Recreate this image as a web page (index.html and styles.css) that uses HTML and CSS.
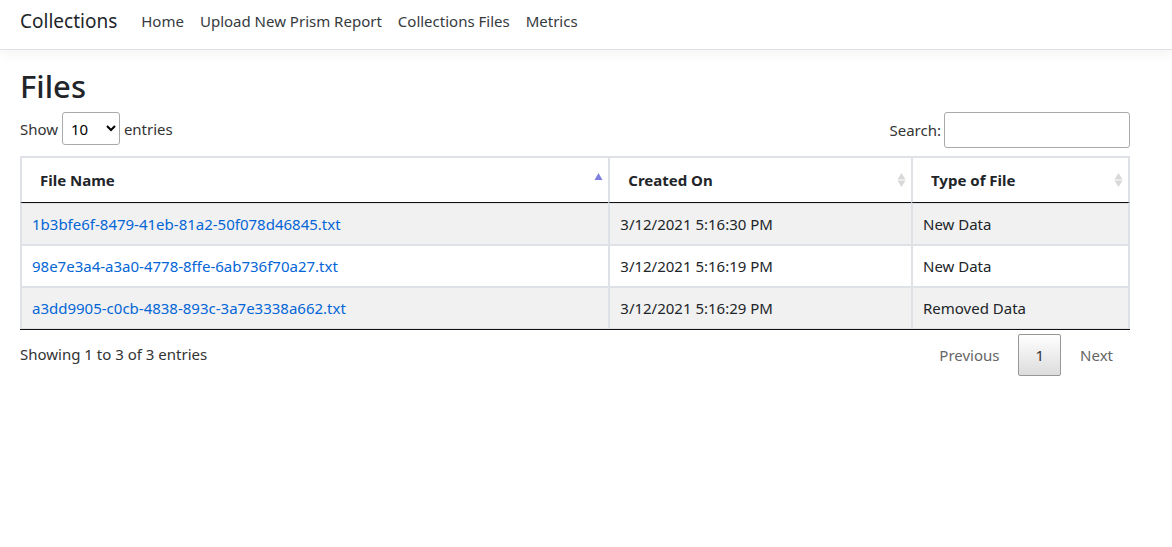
FILE: index.html
```html
<!DOCTYPE html>
<html lang="en">
<head>
<meta charset="utf-8">
<title>Files - Collections</title>
<link rel="stylesheet" href="styles.css">
</head>
<body>
<header class="navbar">
  <a class="brand" href="#">Collections</a>
  <nav class="nav">
    <a href="#">Home</a>
    <a href="#">Upload New Prism Report</a>
    <a href="#">Collections Files</a>
    <a href="#">Metrics</a>
  </nav>
</header>
<main class="content">
  <h1 class="title">Files</h1>
  <div class="toolbar">
    <label class="length">Show
      <select><option>10</option><option>25</option><option>50</option><option>100</option></select>
      entries</label>
    <label class="search">Search:<input type="search"></label>
  </div>
  <table class="files">
    <colgroup><col class="col-name"><col><col class="col-type"></colgroup>
    <thead>
      <tr>
        <th scope="col"><span class="head">File Name <svg class="sort" viewBox="0 0 9 14"><path class="on" d="M.5 7 4.500 0 8.500 7z"/></svg></span></th>
        <th scope="col"><span class="head">Created On <svg class="sort" viewBox="0 0 9 14"><path d="M.5 6.500 4.500 0 8.500 6.500zM.5 7.500h8L4.500 14z"/></svg></span></th>
        <th scope="col"><span class="head">Type of File <svg class="sort" viewBox="0 0 9 14"><path d="M.5 6.500 4.500 0 8.500 6.500zM.5 7.500h8L4.500 14z"/></svg></span></th>
      </tr>
    </thead>
    <tbody>
      <tr><td><a href="#">1b3bfe6f-8479-41eb-81a2-50f078d46845.txt</a></td><td>3/12/2021 5:16:30 PM</td><td>New Data</td></tr>
      <tr><td><a href="#">98e7e3a4-a3a0-4778-8ffe-6ab736f70a27.txt</a></td><td>3/12/2021 5:16:19 PM</td><td>New Data</td></tr>
      <tr><td><a href="#">a3dd9905-c0cb-4838-893c-3a7e3338a662.txt</a></td><td>3/12/2021 5:16:29 PM</td><td>Removed Data</td></tr>
    </tbody>
  </table>
  <div class="footer">
    <div class="info">Showing 1 to 3 of 3 entries</div>
    <div class="pager">
      <button type="button" class="page" disabled>Previous</button>
      <button type="button" class="page current">1</button>
      <button type="button" class="page" disabled>Next</button>
    </div>
  </div>
</main>
</body>
</html>
```
FILE: styles.css
```css
* { box-sizing: border-box; }
body {
  margin: 0;
  background: #fff;
  color: #212529;
  font: 15px/24px "Segoe UI", "Noto Sans", "Open Sans", sans-serif;
}
a { color: #0366d6; text-decoration: none; }
.navbar {
  display: flex;
  align-items: center;
  gap: 24px;
  height: 50px;
  padding: 0 20px 7px;
  border-bottom: 1px solid #dee2e6;
  box-shadow: 0 4px 12px rgba(0, 0, 0, .05);
}
.navbar a { color: #343a40; }
.navbar .brand { font-size: 19px; color: #212529; }
.nav { display: flex; gap: 16px; }
.content { padding: 17px 42px 0 20px; }
.title { margin: 0 0 7px; font-size: 31px; line-height: 38px; font-weight: 500; }
.toolbar { display: flex; justify-content: space-between; align-items: flex-start; margin-bottom: 8px; }
select, input, button { font: inherit; color: inherit; }
.length { color: #333; }
.search { color: #333; }
.length select {
  height: 33px;
  width: 58px;
  padding: 4px;
  border: 1px solid #aaa;
  border-radius: 3px;
  background: #fff;
  color: #000;
}
.search { display: flex; align-items: center; gap: 3px; }
.search input { width: 186px; height: 36px; padding: 5px; border: 1px solid #aaa; border-radius: 3px; background: #fff; }
.files { width: 100%; table-layout: fixed; border-collapse: separate; border-spacing: 0; border-bottom: 1px solid #111; }
.col-name { width: 53%; }
.col-type { width: 219px; }
.files th, .files td { border: 0 solid #dee2e6; border-left-width: 2px; text-align: left; }
.files th:last-child, .files td:last-child { border-right-width: 2px; }
.files th { padding: 10px 5px 10px 18px; font-weight: 700; border-top-width: 2px; border-bottom: 1px solid #111; }
.files td { padding: 8px 10px; border-bottom-width: 2px; }
.files tbody tr:first-child td { border-top-width: 1px; }
.files tbody tr:last-child td { border-bottom-width: 1px; }
.files tbody tr:nth-child(odd) { background: #f1f1f1; }
.head { display: flex; align-items: center; justify-content: space-between; }
.sort { width: 9px; height: 14px; fill: #d8d8d8; }
.sort .on { fill: #8080e0; }
.footer { display: flex; justify-content: space-between; padding-top: 4px; color: #333; }
.info { padding-top: 8px; }
.pager { display: flex; gap: 2px; }
.page { height: 42px; padding: 0 16px; border: 1px solid transparent; border-radius: 2px; background: none; color: #666; }
.page.current { color: #333; border-color: #979797; background: linear-gradient(#fff, #dcdcdc); }
```
